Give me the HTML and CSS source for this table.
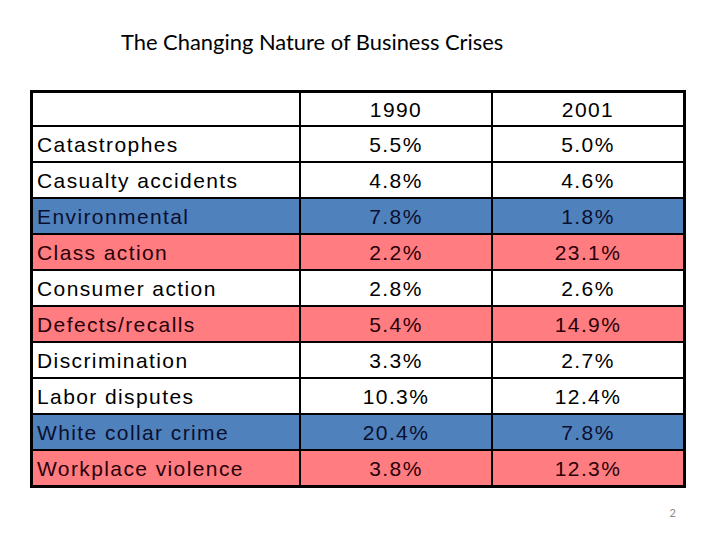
FILE: index.html
```html
<!DOCTYPE html>
<html>
<head>
<meta charset="utf-8">
<link rel="stylesheet" href="styles.css">
</head>
<body>
<div class="slide">
  <h1 class="title">The Changing Nature of Business Crises</h1>
  <div class="table">
    <div class="cell"></div><div class="cell num">1990</div><div class="cell num">2001</div>
    <div class="cell">Catastrophes</div><div class="cell num">5.5%</div><div class="cell num">5.0%</div>
    <div class="cell">Casualty accidents</div><div class="cell num">4.8%</div><div class="cell num">4.6%</div>
    <div class="cell blue">Environmental</div><div class="cell num blue">7.8%</div><div class="cell num blue">1.8%</div>
    <div class="cell red">Class action</div><div class="cell num red">2.2%</div><div class="cell num red">23.1%</div>
    <div class="cell">Consumer action</div><div class="cell num">2.8%</div><div class="cell num">2.6%</div>
    <div class="cell red">Defects/recalls</div><div class="cell num red">5.4%</div><div class="cell num red">14.9%</div>
    <div class="cell">Discrimination</div><div class="cell num">3.3%</div><div class="cell num">2.7%</div>
    <div class="cell">Labor disputes</div><div class="cell num">10.3%</div><div class="cell num">12.4%</div>
    <div class="cell blue">White collar crime</div><div class="cell num blue">20.4%</div><div class="cell num blue">7.8%</div>
    <div class="cell red">Workplace violence</div><div class="cell num red">3.8%</div><div class="cell num red">12.3%</div>
  </div>
  <div class="footer"><span class="page">2</span></div>
</div>
</body>
</html>
```

FILE: styles.css
```css
html, body {
  margin: 0;
  padding: 0;
  background: #fff;
}
.slide {
  width: 720px;
  height: 540px;
  display: flex;
  flex-direction: column;
  background: #fff;
}
.title {
  margin: 29px 0 0 121px;
  font-family: Lato, "Liberation Sans", sans-serif;
  font-weight: normal;
  font-size: 21.9px;
  line-height: 26px;
  color: #000;
  height: 26px;
}
.table {
  margin: 35px 0 0 30px;
  width: 650px;
  border: 3px solid #000;
  background: #000;
  display: grid;
  grid-template-columns: 266px 190px 190px;
  grid-template-rows: 32px repeat(10, 34px);
  gap: 2px;
}
.cell {
  background: #fff;
  display: flex;
  align-items: center;
  padding: 2px 0 0 4px;
  font-family: "Liberation Sans", Arial, sans-serif;
  font-size: 21px;
  letter-spacing: 1.4px;
  color: #000;
  white-space: nowrap;
}
.num {
  justify-content: center;
  padding-left: 0;
}
.blue {
  background: #4f81bd;
  color: #0b0f2e;
}
.red {
  background: #ff7c80;
  color: #2a0008;
}
.footer {
  display: flex;
  justify-content: flex-end;
  padding: 18px 44px 0 0;
}
.page {
  font-family: Lato, "Liberation Sans", sans-serif;
  font-size: 11px;
  color: #8a8a8a;
}
```
